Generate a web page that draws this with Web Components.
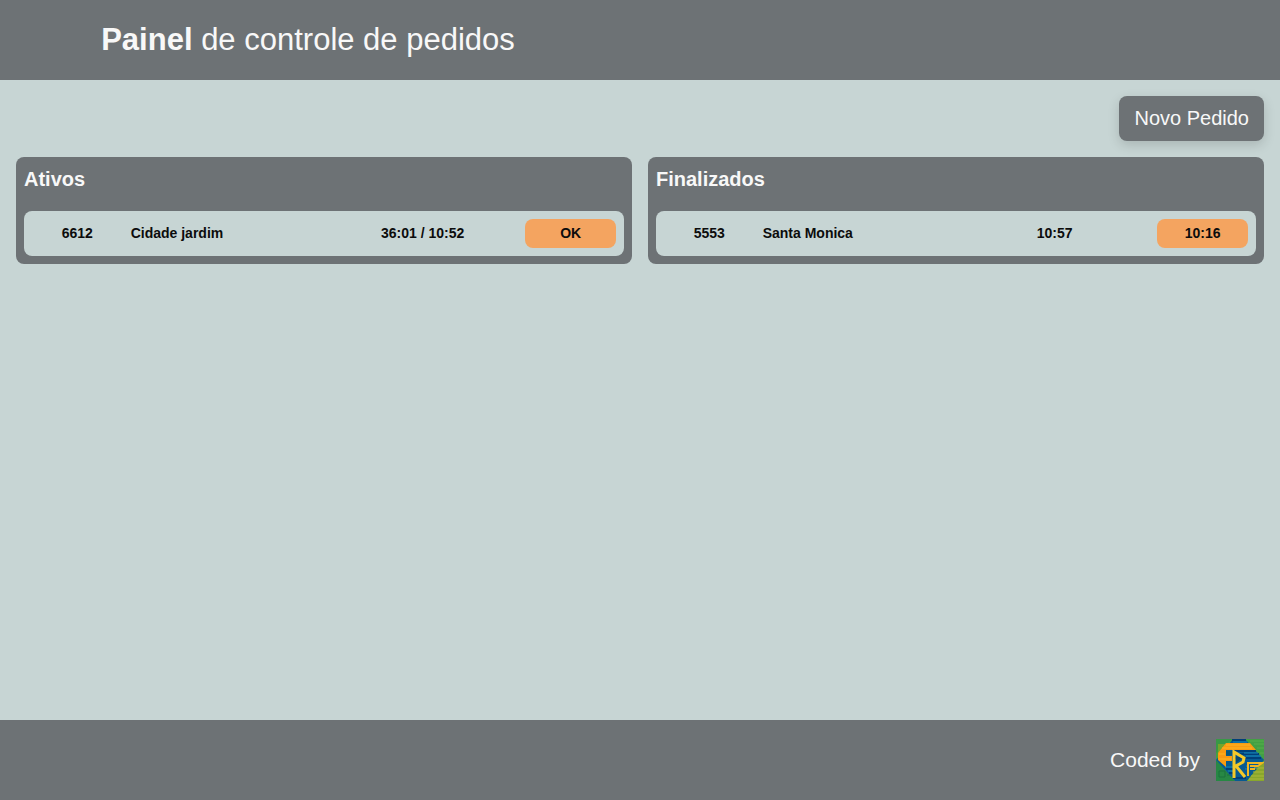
<!DOCTYPE html>
<html lang="pt-BR">
<head>
<meta charset="utf-8">
<meta name="viewport" content="width=device-width, initial-scale=1">
<title>Painel de controle de pedidos</title>
<style>
  :root {
    --slate: #6d7275;
    --mist: #c7d5d4;
    --accent: #f4a460;
    --light: #f8f8f8;
    --ink: #0c0c0c;
  }
  body { margin: 0; background: var(--mist); color: var(--ink); font-family: "Liberation Sans", Arial, sans-serif; }
</style>
</head>
<body>
<order-app></order-app>
<script>
const define = (name, html) => {
  const template = document.createElement('template');
  template.innerHTML = html;
  customElements.define(name, class extends HTMLElement {
    constructor() {
      super();
      this.attachShadow({ mode: 'open' }).append(template.content.cloneNode(true));
    }
  });
};

define('app-header', `
  <style>
    :host { display: grid; grid-template-columns: 1fr 1fr; gap: 48px; align-items: center; min-height: 80px; background: var(--slate); color: var(--light); }
    h1 { margin: 0; font-size: 31px; line-height: 40px; font-weight: 400; text-align: center; }
  </style>
  <h1><slot></slot></h1>`);

define('new-order-button', `
  <style>
    :host { display: block; }
    button { border: 0; border-radius: 8px; padding: 8px 15px; background: var(--slate); color: var(--light); font: 20px/29px "Liberation Sans", Arial, sans-serif; cursor: pointer; box-shadow: 0 4px 12px rgb(0 0 0 / 15%); }
  </style>
  <button type="button"><slot></slot></button>`);

define('order-row', `
  <style>
    :host { display: grid; grid-template-columns: repeat(6, 1fr); gap: 8px; align-items: center; padding: 8px; border-radius: 8px; background: var(--mist); color: var(--ink); font-size: 14px; line-height: 21px; font-weight: 700; }
    .code, .time { text-align: center; }
    .place, .time { grid-column: span 2; }
    button { border: 0; border-radius: 8px; padding: 4px; background: var(--accent); color: inherit; font: inherit; cursor: pointer; }
  </style>
  <span class="code"><slot name="code"></slot></span>
  <span class="place"><slot name="place"></slot></span>
  <span class="time"><slot name="time"></slot></span>
  <button type="button"><slot name="action"></slot></button>`);

define('order-panel', `
  <style>
    :host { display: block; padding: 8px; border-radius: 8px; background: var(--slate); }
    h2 { margin: 0 0 18px; color: var(--light); font-size: 20px; line-height: 28px; font-weight: 700; }
    .rows { display: grid; gap: 8px; }
  </style>
  <section>
    <h2><slot name="title"></slot></h2>
    <div class="rows"><slot></slot></div>
  </section>`);

define('author-logo', `
  <style>
    :host, svg { display: block; }
  </style>
  <svg width="48" height="42" viewBox="0 0 48 42" role="img" aria-label="FRF">
    <rect width="48" height="42" fill="#43a043"/>
    <path d="M0 0h16L0 14z" fill="#389946"/>
    <path d="M2 5h10L2 17z" fill="#75a52b"/>
    <path d="M0 21l19 21H0z" fill="#278844"/>
    <path d="M3 32h6v6H3zM11 36h5" fill="none" stroke="#1d713c"/>
    <path d="M34 2h14M38 5h10M41 9h7M44 14h4" stroke="#59ad4c"/>
    <path d="M17 0h12l19 21-17 21H19L0 21z" fill="#075b92"/>
    <path d="M16 1h14M18 12h22M19 15h24M19 19h26M10 30h8M13 34h5M17 39h13" stroke="#003f79" stroke-width="2"/>
    <path d="M17 3h14M28 14h14M30 17h15M9 28h8M12 32h6M30 27h3M29 30h3" stroke="#1686b5"/>
    <path d="M10 4h24l6 7H10v6h6v5h-6v6l-8-7v-7z" fill="#f99b12"/>
    <path d="M10 6h24M6 9h30M3 15h6M3 20h12" stroke="#ffb520"/>
    <path d="M10 12h6v4h-6z" fill="#07577d"/>
    <path d="M31 42l4-5 13-15v20z" fill="#89a72c"/>
    <path d="M38 29h10M37 33h11M35 37h13M33 40h15" stroke="#abb83b"/>
    <path d="M18 39V13l10 6-1 4-7 4 9 11" fill="none" stroke="#f4c928" stroke-width="3"/>
    <path d="M32 37V24h14l-4 3h-8M34 30h5" fill="none" stroke="#efb622" stroke-width="2"/>
    <path d="M20 17l5 3-5 4z" fill="#064870"/>
  </svg>`);

define('app-footer', `
  <style>
    :host { display: flex; align-items: center; justify-content: flex-end; gap: 16px; min-height: 80px; padding: 0 16px; background: var(--slate); color: var(--light); font-size: 21px; line-height: 30px; }
    a { display: block; }
  </style>
  <span><slot></slot></span>
  <a href="#" aria-label="FRF"><author-logo></author-logo></a>`);

define('order-app', `
  <style>
    :host { display: flex; flex-direction: column; min-height: 100vh; }
    main { flex: 1; display: flex; flex-direction: column; gap: 16px; padding: 16px; }
    .actions { display: flex; justify-content: flex-end; }
    .panels { display: grid; grid-template-columns: 1fr 1fr; gap: 16px; align-items: start; }
  </style>
  <app-header><strong>Painel</strong> de controle de pedidos</app-header>
  <main>
    <div class="actions"><new-order-button>Novo Pedido</new-order-button></div>
    <div class="panels">
      <order-panel>
        <span slot="title">Ativos</span>
        <order-row>
          <span slot="code">6612</span>
          <span slot="place">Cidade jardim</span>
          <span slot="time">36:01 / 10:52</span>
          <span slot="action">OK</span>
        </order-row>
      </order-panel>
      <order-panel>
        <span slot="title">Finalizados</span>
        <order-row>
          <span slot="code">5553</span>
          <span slot="place">Santa Monica</span>
          <span slot="time">10:57</span>
          <span slot="action">10:16</span>
        </order-row>
      </order-panel>
    </div>
  </main>
  <app-footer>Coded by</app-footer>`);
</script>
</body>
</html>
